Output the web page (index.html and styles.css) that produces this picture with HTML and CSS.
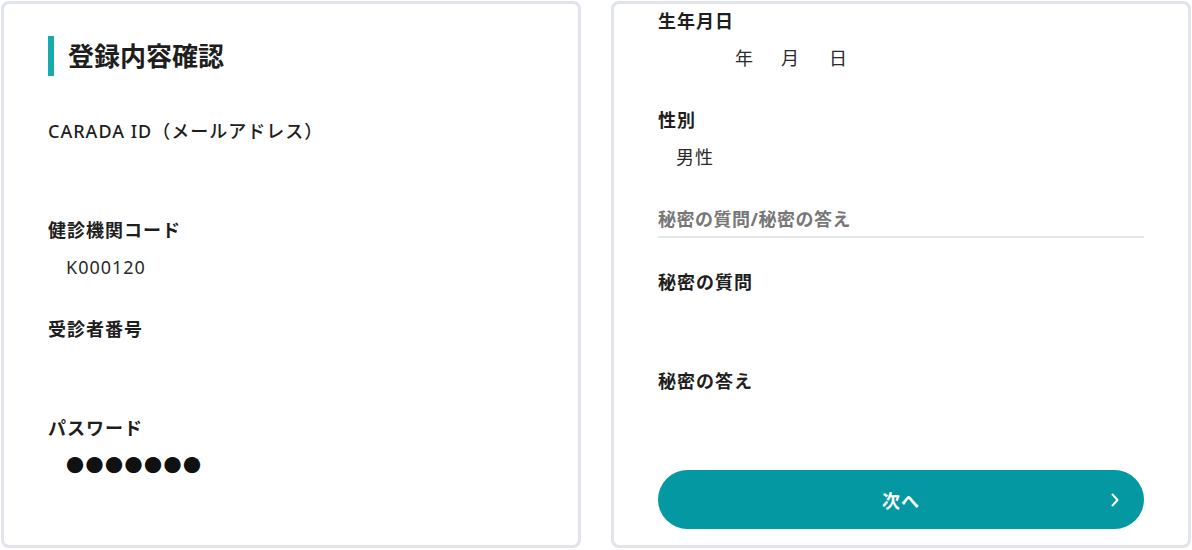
FILE: index.html
```html
<!DOCTYPE html>
<html lang="ja">
<head>
  <meta charset="utf-8">
  <title>登録内容確認</title>
  <meta name="viewport" content="width=device-width, initial-scale=1.0">
  <link rel="stylesheet" href="styles.css">
</head>
<body>
  <div class="pagina">
    <section class="tarjeta">
      <h1 class="titulo">登録内容確認</h1>
      <div class="campo">
        <p class="etiqueta etiqueta-fina">CARADA ID（メールアドレス）</p>
        <p class="valor"></p>
      </div>
      <div class="campo">
        <p class="etiqueta">健診機関コード</p>
        <p class="valor">K000120</p>
      </div>
      <div class="campo">
        <p class="etiqueta">受診者番号</p>
        <p class="valor"></p>
      </div>
      <div class="campo">
        <p class="etiqueta">パスワード</p>
        <p class="valor puntos">●●●●●●●</p>
      </div>
    </section>

    <section class="tarjeta tarjeta-der">
      <div class="campo">
        <p class="etiqueta">生年月日</p>
        <p class="valor fecha">
          <span class="hueco anio"></span>年<span class="hueco mes"></span>月<span class="hueco dia"></span>日
        </p>
      </div>
      <div class="campo">
        <p class="etiqueta">性別</p>
        <p class="valor">男性</p>
      </div>
      <h2 class="subtitulo">秘密の質問/秘密の答え</h2>
      <div class="campo">
        <p class="etiqueta">秘密の質問</p>
        <p class="valor"></p>
      </div>
      <div class="campo">
        <p class="etiqueta">秘密の答え</p>
        <p class="valor"></p>
      </div>
      <a href="#" class="btn">次へ
        <svg class="flecha" width="8" height="14" viewBox="0 0 8 14">
          <path d="M1.5 1.5 L6.5 7 L1.5 12.5" fill="none" stroke="#fff" stroke-width="2" stroke-linecap="round" stroke-linejoin="round"/>
        </svg>
      </a>
    </section>
  </div>
</body>
</html>
```

FILE: styles.css
```css
*{
  margin: 0;
  padding: 0;
  box-sizing: border-box;
}

body{
  background: #fff;
  font-family: "Noto Sans", "Noto Sans CJK JP", sans-serif;
  color: #1e1e1e;
}

a{
  text-decoration: none;
  display: inline-block;
}

.pagina{
  display: flex;
  gap: 30px;
  padding: 1px;
}

.tarjeta{
  width: 580px;
  height: 547px;
  border: 3px solid #e1e3ef;
  border-radius: 8px;
  padding: 32px 44px 0;
  overflow: hidden;
}

.tarjeta-der{
  padding-top: 4px;
}

.titulo{
  border-left: 6px solid #17a9ae;
  padding-left: 14px;
  font-size: 26px;
  line-height: 40px;
  font-weight: 700;
  margin-bottom: 42px;
}

.campo{
  margin-bottom: 36px;
}

.etiqueta{
  font-size: 18px;
  line-height: 26px;
  font-weight: 700;
  letter-spacing: 1px;
}

.etiqueta-fina{
  font-weight: 500;
  letter-spacing: 1px;
}

.valor{
  margin-top: 11px;
  min-height: 26px;
  padding-left: 18px;
  font-size: 18px;
  line-height: 26px;
  color: #2a2a2a;
  letter-spacing: 1px;
}

.puntos{
  color: #111;
  letter-spacing: 1.5px;
}

.fecha{
  display: flex;
  align-items: center;
}

.hueco{
  display: inline-block;
}

.anio{ width: 59px; }
.mes{ width: 27px; }
.dia{ width: 29px; }

.subtitulo{
  font-size: 18px;
  line-height: 26px;
  font-weight: 700;
  color: #777;
  letter-spacing: 0.5px;
  padding-bottom: 4px;
  border-bottom: 2px solid #e6e7ec;
  margin-bottom: 31px;
}

.btn{
  position: relative;
  display: flex;
  align-items: center;
  justify-content: center;
  width: 100%;
  height: 59px;
  margin-top: 39px;
  border-radius: 30px;
  background: #0398a2;
  color: #fff;
  font-size: 18px;
  font-weight: 700;
  letter-spacing: 1px;
}

.flecha{
  position: absolute;
  right: 25px;
  top: 23px;
}
```
